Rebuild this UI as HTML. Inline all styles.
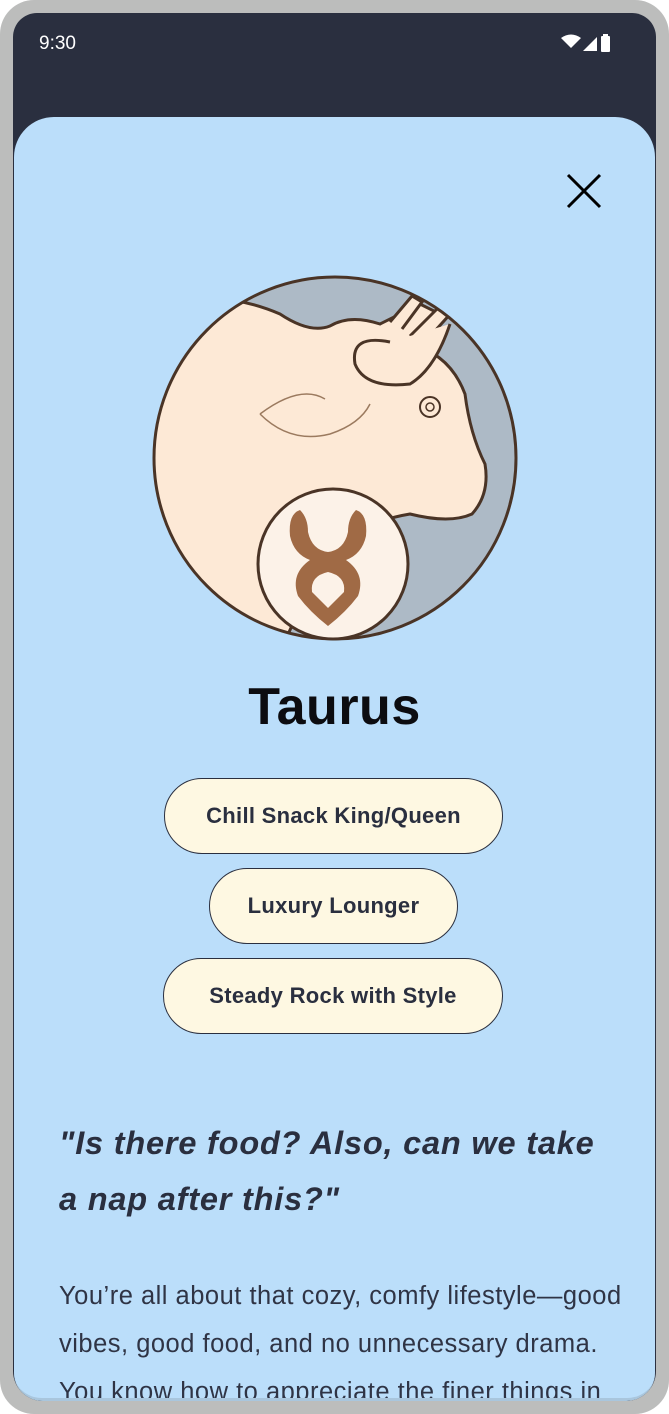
<!DOCTYPE html>
<html><head><meta charset="utf-8"><style>
*{margin:0;padding:0;box-sizing:border-box}
body{width:669px;height:1414px;background:#fff;position:relative;overflow:hidden;font-family:"Liberation Sans",sans-serif}
.frame{position:absolute;left:0;top:0;width:669px;height:1414px;background:#bcbdbc;border-radius:34px}
.screen{position:absolute;left:13px;top:13px;width:643px;height:1388px;background:#2a2f3f;border-radius:24px 24px 30px 30px;overflow:hidden}
.time{position:absolute;left:26px;top:20px;color:#fff;font-size:19px}
.sheet{position:absolute;left:1px;top:104px;width:641px;height:1284px;background:#bbdefa;border-radius:40px 40px 28px 28px;overflow:hidden;border-bottom:3px solid #a9c6dd}
.btn{position:absolute;height:76px;border:1.5px solid #2a2f3f;background:#fef8e2;border-radius:38px;color:#2a2f3f;font-weight:bold;font-size:22px;display:flex;align-items:center;justify-content:center;letter-spacing:0.3px}
h1{position:absolute;left:0;width:641px;top:560px;text-align:center;font-size:52px;font-weight:bold;color:#0c0c10;letter-spacing:0.5px}
.quote{position:absolute;left:45px;top:998px;width:575px;font-size:32.5px;font-style:italic;font-weight:bold;color:#2a2f3f;line-height:56px;letter-spacing:0.8px}
.para{position:absolute;left:45px;top:1155px;width:578px;font-size:25.5px;letter-spacing:0.5px;color:#2f3445;line-height:48px}
</style></head><body>
<div class="frame"></div>
<div class="screen">
<div class="time">9:30</div>
<svg style="position:absolute;left:548px;top:20px" width="66" height="22" viewBox="0 0 66 22">
<path d="M0 5 Q10 -2 20 5 L10 15 Z" fill="#fff"/>
<path d="M22 18 L36 4 L36 18 Z" fill="#fff"/>
<rect x="40" y="3" width="9" height="16" rx="1" fill="#fff"/><rect x="42" y="1" width="5" height="3" fill="#fff"/>
</svg>
<div class="sheet">
<svg style="position:absolute;left:552px;top:56px" width="36" height="36" viewBox="0 0 36 36"><path d="M2 2 L34 34 M34 2 L2 34" stroke="#000" stroke-width="3"/></svg>
<svg style="position:absolute;left:136px;top:157px" width="370" height="370" viewBox="0 0 370 370">
<defs><clipPath id="c"><circle cx="185" cy="184" r="181"/></clipPath></defs>
<circle cx="185" cy="184" r="181" fill="#adbac6"/>
<g clip-path="url(#c)">
<path d="M0 40 Q60 10 130 40 Q160 60 180 52 Q200 40 230 50 L270 30 L290 40 L260 70 Q300 80 315 120 Q320 160 335 190 Q340 220 322 240 Q300 250 260 240 Q200 250 170 290 L120 400 L-10 400 Z" fill="#fde9d6" stroke="#4a3426" stroke-width="3"/>
<path d="M240 48 L262 22 L272 28 L252 55 M260 62 L292 30 L302 38 L275 68" fill="#fde9d6" stroke="#4a3426" stroke-width="3"/>
<path d="M240 68 Q200 60 205 90 Q215 115 260 110 Q285 95 300 50" fill="#fde9d6" stroke="#4a3426" stroke-width="3"/>
<path d="M110 140 Q140 170 180 160 Q210 150 220 130 M110 140 Q150 110 175 125" fill="none" stroke="#9b7a5f" stroke-width="1.5"/>
<circle cx="280" cy="133" r="10" fill="none" stroke="#4a3426" stroke-width="2"/><circle cx="280" cy="133" r="4" fill="none" stroke="#4a3426" stroke-width="1.5"/>
</g>
<circle cx="185" cy="184" r="181" fill="none" stroke="#4a3426" stroke-width="3"/>
<circle cx="183" cy="290" r="75" fill="#fcf2e8" stroke="#4a3426" stroke-width="3"/>
<path d="M150 236 Q138 240 140 262 Q144 280 160 286 Q140 300 148 322 Q160 338 178 352 Q196 338 208 322 Q216 300 196 286 Q212 280 216 262 Q218 240 206 236 Q198 244 198 258 Q194 276 178 278 Q162 276 158 258 Q158 244 150 236 Z M178 298 Q196 302 194 318 L178 334 L162 318 Q160 302 178 298 Z" fill="#a06a45" fill-rule="evenodd"/>
</svg>
<h1>Taurus</h1>
<div class="btn" style="left:150px;top:661px;width:339px">Chill Snack King/Queen</div>
<div class="btn" style="left:195px;top:751px;width:249px">Luxury Lounger</div>
<div class="btn" style="left:149px;top:841px;width:340px">Steady Rock with Style</div>
<div class="quote">"Is there food? Also, can we take<br>a nap after this?"</div>
<div class="para">You’re all about that cozy, comfy lifestyle—good vibes, good food, and no unnecessary drama. You know how to appreciate the finer things in</div>
</div>
</div>
</body></html>
